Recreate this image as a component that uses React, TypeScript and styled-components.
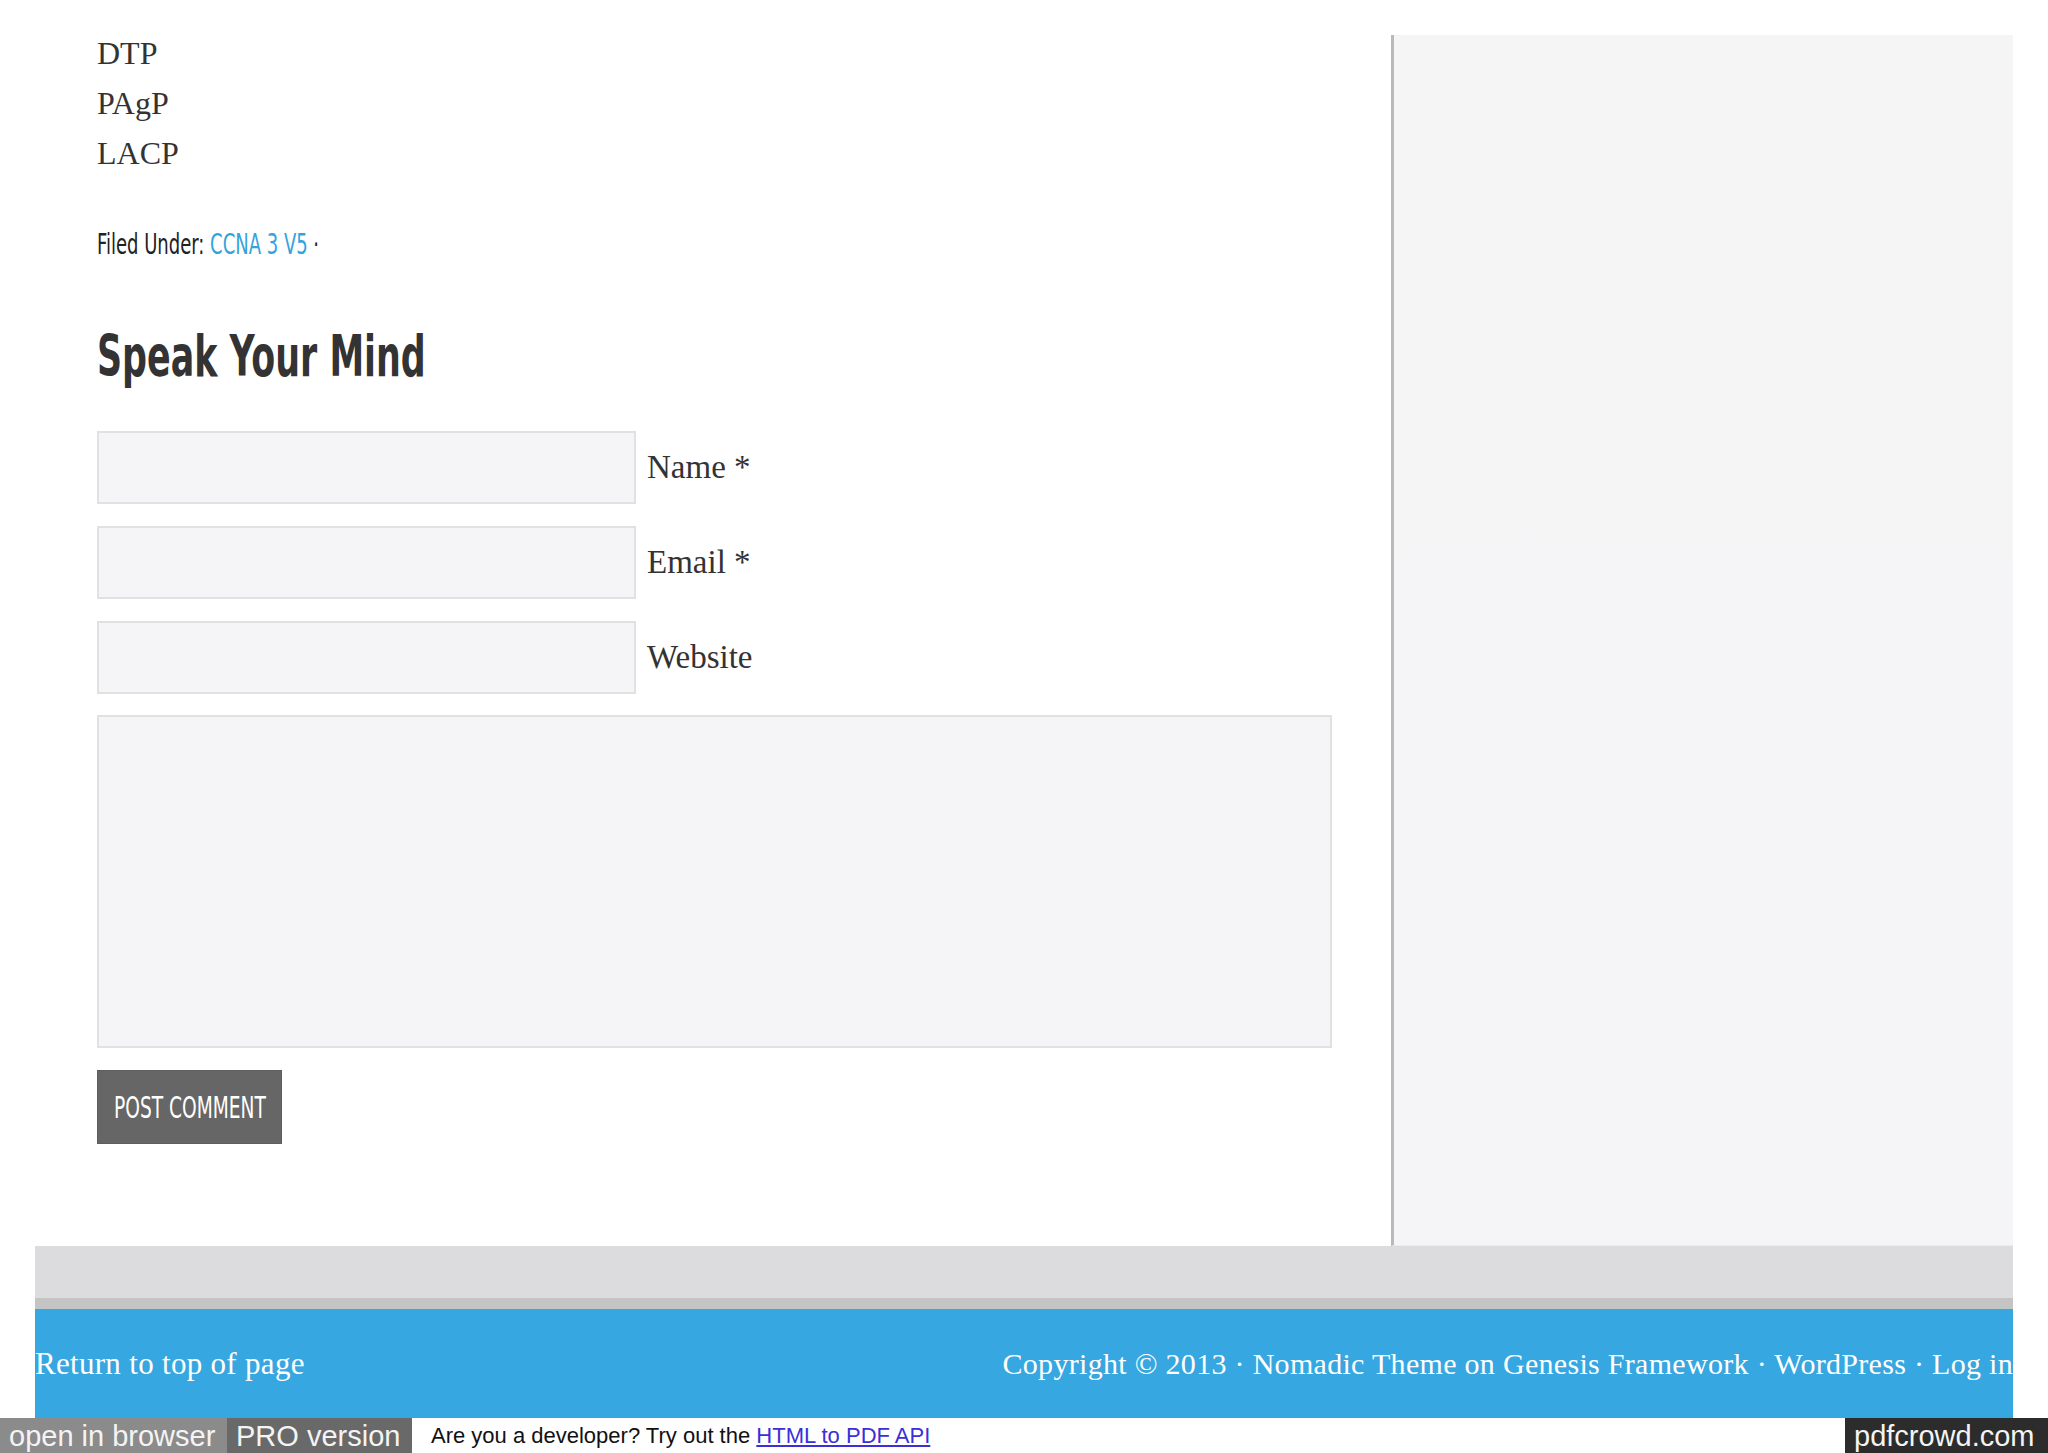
import React from 'react';
import styled, { createGlobalStyle } from 'styled-components';

const serif = `"Liberation Serif", "Times New Roman", serif`;
const narrow = `"DejaVu Sans Condensed", "DejaVu Sans", sans-serif`;
const sans = `"Liberation Sans", Arial, sans-serif`;

const GlobalStyle = createGlobalStyle`
  html, body {
    margin: 0;
    padding: 0;
    background: #fff;
  }
  body {
    font-family: ${serif};
    color: #333;
  }
  * {
    box-sizing: border-box;
  }
`;

const Page = styled.div`
  width: 2048px;
  min-height: 1453px;
  display: flex;
  flex-direction: column;
`;

const Wrap = styled.div`
  margin: 0 35px;
  display: grid;
  grid-template-columns: 1356px 1fr;
`;

const Content = styled.main`
  padding: 28px 59px 102px 62px;
  background: #fff;
`;

const Sidebar = styled.aside`
  margin-top: 35px;
  background: linear-gradient(#f5f5f5, #f5f4f7);
  border-left: 3px solid #b9b9b9;
  border-bottom: 1px solid #ececee;
`;

// the theme's headline face is a tall condensed sans; squeeze the closest local one
const Squeeze = styled.span<{ $x: number }>`
  display: inline-block;
  white-space: nowrap;
  transform: scaleX(${(p) => p.$x});
  transform-origin: left center;
`;

const Line = styled.p`
  margin: 0;
  font-size: 32px;
  line-height: 50px;
  color: #333;
`;

const Meta = styled.p`
  margin: 51px 0 0;
  font-family: ${narrow};
  font-size: 29px;
  line-height: 30px;
  color: #222;
`;

const MetaLink = styled.a`
  color: #33a3dc;
  text-decoration: none;
`;

const Heading = styled.h3`
  margin: 69px 0 0;
  font-family: ${narrow};
  font-weight: 700;
  font-size: 57px;
  line-height: 56px;
  color: #333;
`;

const Form = styled.form`
  margin-top: 47px;
  display: flex;
  flex-direction: column;
  gap: 22px;
`;

const Row = styled.p`
  margin: 0;
  display: flex;
  align-items: center;
  gap: 11px;
`;

const Field = styled.input`
  width: 539px;
  height: 73px;
  margin: 0;
  border: 2px solid #e1e0e3;
  background: #f5f5f7;
  font-family: ${serif};
  font-size: 24px;
  outline: none;
`;

const Label = styled.label`
  font-size: 33px;
  color: #333;
`;

const TextArea = styled.textarea`
  display: block;
  width: 1235px;
  height: 333px;
  margin: -1px 0 0;
  border: 2px solid #e1e0e3;
  background: #f5f5f7;
  resize: none;
  outline: none;
`;

const Submit = styled.button`
  align-self: flex-start;
  width: 185px;
  height: 74px;
  padding: 0 16px;
  border: 1px solid #5e5e5e;
  background: #666;
  color: #fff;
  font-family: ${narrow};
  font-size: 30px;
  text-align: left;
  text-transform: uppercase;
  overflow: hidden;
  cursor: pointer;
`;

const Widgets = styled.div`
  margin: 0 35px;
  height: 63px;
  background: #dcdbde;
  border-bottom: 11px solid #c4c4c4;
`;

const Footer = styled.footer`
  margin: 0 35px;
  height: 109px;
  background: #36a7e0;
  display: flex;
  align-items: center;
  justify-content: space-between;
  color: #fff;
  font-family: ${serif};
`;

const FooterText = styled.span<{ $size: number; $spacing: number }>`
  font-size: ${(p) => p.$size}px;
  letter-spacing: ${(p) => p.$spacing}px;
  white-space: nowrap;
`;

const Bar = styled.div`
  height: 36px;
  display: flex;
  align-items: stretch;
  font-family: ${sans};
  line-height: 36px;
`;

const BarTag = styled.span<{ $bg: string; $w: number }>`
  width: ${(p) => p.$w}px;
  padding-left: 9px;
  background: ${(p) => p.$bg};
  color: #f4f4f4;
  font-size: 29px;
  white-space: nowrap;
  overflow: hidden;
`;

const BarNote = styled.span`
  flex: 1;
  padding-left: 19px;
  font-size: 22px;
  color: #111;
`;

const BarLink = styled.a`
  color: #3a2fd8;
  text-decoration: underline;
`;

export default function App() {
  return (
    <>
      <GlobalStyle />
      <Page>
        <Wrap>
          <Content>
            <Line>DTP</Line>
            <Line>PAgP</Line>
            <Line>LACP</Line>
            <Meta>
              <Squeeze $x={0.69}>
                Filed Under: <MetaLink href="#">CCNA 3 V5</MetaLink> ·
              </Squeeze>
            </Meta>
            <Heading>
              <Squeeze $x={0.68}>Speak Your Mind</Squeeze>
            </Heading>
            <Form onSubmit={(e) => e.preventDefault()}>
              <Row>
                <Field id="author" type="text" />
                <Label htmlFor="author">Name *</Label>
              </Row>
              <Row>
                <Field id="email" type="text" />
                <Label htmlFor="email">Email *</Label>
              </Row>
              <Row>
                <Field id="url" type="text" />
                <Label htmlFor="url">Website</Label>
              </Row>
              <TextArea />
              <Submit type="submit">
                <Squeeze $x={0.69}>Post Comment</Squeeze>
              </Submit>
            </Form>
          </Content>
          <Sidebar />
        </Wrap>
        <Widgets />
        <Footer>
          <FooterText $size={31} $spacing={0.3}>
            Return to top of page
          </FooterText>
          <FooterText $size={30} $spacing={0.3}>
            Copyright © 2013 · Nomadic Theme on Genesis Framework · WordPress · Log in
          </FooterText>
        </Footer>
        <Bar>
          <BarTag $bg="#8b8b8b" $w={227}>open in browser</BarTag>
          <BarTag $bg="#696969" $w={185}>PRO version</BarTag>
          <BarNote>
            Are you a developer? Try out the <BarLink href="#">HTML to PDF API</BarLink>
          </BarNote>
          <BarTag $bg="#2c2c2c" $w={203}>pdfcrowd.com</BarTag>
        </Bar>
      </Page>
    </>
  );
}
